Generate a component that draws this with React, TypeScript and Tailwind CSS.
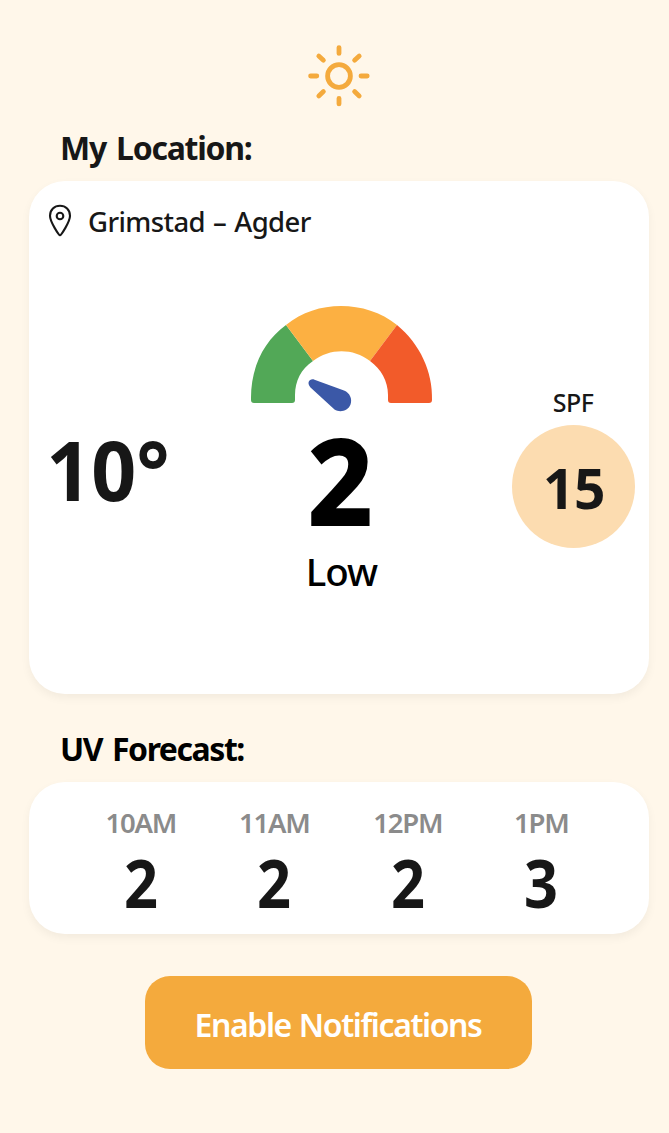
import React from "react";

const forecast = [
  { time: "10AM", uv: 2 },
  { time: "11AM", uv: 2 },
  { time: "12PM", uv: 2 },
  { time: "1PM", uv: 3 },
];

function SunIcon() {
  return (
    <svg className="h-[64px] w-[64px]" viewBox="0 0 64 64" fill="none" stroke="#f4aa3d" strokeWidth="4.8" strokeLinecap="round">
      <circle cx="32" cy="32" r="11.4" />
      <path d="M32 3.600v5.800M32 54.300v5.600M3.600 32h6.200M54 32h6.200M11.800 12l4.600 4.200M52.200 12l-4.600 4.200M11.800 51.900l4.600-4.300M52.200 51.900l-4.600-4.300" />
    </svg>
  );
}

function PinIcon() {
  return (
    <svg className="mb-[5px] h-[34px] w-[24px]" viewBox="0 0 24 34" fill="none" stroke="#171717" strokeWidth="2.1" strokeLinejoin="round">
      <path d="M12 32.3C11 32.3 2 19 2 12.8C2 6.5 6.400 2.800 12 2.800S22 6.500 22 12.800C22 19 13 32.300 12 32.300Z" />
      <circle cx="12" cy="13" r="3.3" />
    </svg>
  );
}

function Gauge() {
  return (
    <svg className="mr-[2px] h-[108px] w-[184px]" viewBox="0 0 184 108">
      <path d="M37 20L64 56C52 64 46 76 46 90V95Q46 98 43 98H5Q2 98 2 95C1.500 62 15 36 37 20Z" fill="#52a857" />
      <path d="M37 20C53 7 72 1 92 1S132 7 148 20L121 56C104 43 81 43 64 56Z" fill="#fcb042" />
      <path d="M148 20C171 39 184 67 183 95Q183 98 180 98H142Q139 98 139 95V90C139 76 132 64 121 56Z" fill="#f25b2a" />
      <path d="M65.500 74.700L95 85.500C101 88 103.500 94 101.500 99.500C99 106 91 108 85.500 104.500L61.500 82.500C57 77.500 61 73 65.500 74.700Z" fill="#3b58a7" />
    </svg>
  );
}

export default function App() {
  return (
    <main className="flex h-[1133px] w-full flex-col overflow-hidden bg-[#fff7ea] pt-[44px] pr-[20px] pl-[29px] font-['Noto_Sans','Open_Sans',sans-serif] text-[#171717]">
      <header className="flex h-[64px] justify-center pr-[1px]">
        <SunIcon />
      </header>

      <h1 className="mt-[18px] h-[44px] pl-[31px] text-[32px] leading-[43px] font-bold tracking-[-1.25px] [word-spacing:3px] whitespace-nowrap">
        My Location:
      </h1>

      <section className="mt-[11px] flex h-[513px] shrink-0 flex-col rounded-[36px] bg-white shadow-[0_4px_10px_rgba(0,0,0,0.05)]">
        <div className="flex h-[82px] items-center pl-[19px]">
          <PinIcon />
          <span className="ml-[16px] text-[27.5px] leading-[40px] font-medium tracking-[-0.6px] [word-spacing:1.5px] whitespace-nowrap">Grimstad – Agder</span>
        </div>
        <div className="grid grid-cols-[200px_225px_195px]">
          <div className="origin-left scale-x-[0.96] pt-[156px] pl-[18px] text-[82px] leading-[100px] font-bold whitespace-nowrap">10°</div>
          <div className="flex flex-col items-center pt-[42px] text-black">
            <Gauge />
            <div className="mt-[7px] h-[119px] scale-x-[0.94] pr-[3px] text-[122px] leading-[118px] font-extrabold">2</div>
            <div className="mt-[7px] text-[38.5px] leading-[51px] font-medium tracking-[-1px]">Low</div>
          </div>
          <div className="flex flex-col items-center pt-[121px] pl-[43px]">
            <div className="text-[25px] leading-[36px] font-medium tracking-[-0.5px]">SPF</div>
            <div className="mt-[5px] flex h-[123px] w-[123px] items-center justify-center rounded-full bg-[#fcdcb0] pt-[2px] pl-[2px] text-[55px] leading-[60px] font-bold tracking-[-0.5px]">15</div>
          </div>
        </div>
      </section>

      <h2 className="mt-[33px] h-[44px] pl-[31px] text-[32px] leading-[43px] font-bold tracking-[-1.45px] [word-spacing:3px] whitespace-nowrap text-black">
        UV Forecast:
      </h2>

      <section className="mt-[11px] grid h-[152px] shrink-0 grid-cols-4 rounded-[36px] bg-white pt-[21px] pr-[41px] pl-[45px] shadow-[0_4px_10px_rgba(0,0,0,0.05)]">
        {forecast.map((item) => (
          <div key={item.time} className="flex flex-col items-center">
            <span className="text-[27.5px] leading-[39px] font-semibold tracking-[-1.2px] text-[#8b8b8b]">{item.time}</span>
            <span className="scale-x-[0.9] text-[66px] leading-[81px] font-bold">{item.uv}</span>
          </div>
        ))}
      </section>

      <button className="mt-[42px] mr-[2px] h-[93px] w-[387px] shrink-0 self-center rounded-[25px] bg-[#f4aa3d] pt-[4px] text-[32px] leading-[44px] font-semibold tracking-[-1.4px] [word-spacing:1px] whitespace-nowrap text-white">
        Enable Notifications
      </button>
    </main>
  );
}
